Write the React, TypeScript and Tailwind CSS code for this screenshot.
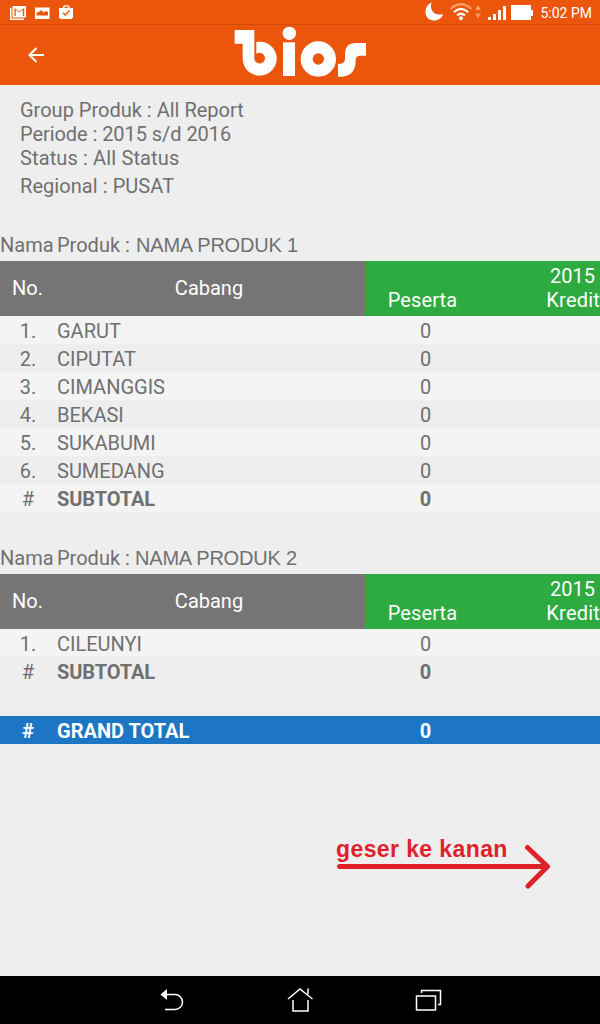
import React from 'react';

type RowData = { no: string; name: string; total?: boolean };

const groups: { title: string; rows: RowData[] }[] = [
  {
    title: 'NAMA PRODUK 1',
    rows: [
      { no: '1.', name: 'GARUT' },
      { no: '2.', name: 'CIPUTAT' },
      { no: '3.', name: 'CIMANGGIS' },
      { no: '4.', name: 'BEKASI' },
      { no: '5.', name: 'SUKABUMI' },
      { no: '6.', name: 'SUMEDANG' },
      { no: '#', name: 'SUBTOTAL', total: true },
    ],
  },
  {
    title: 'NAMA PRODUK 2',
    rows: [
      { no: '1.', name: 'CILEUNYI' },
      { no: '#', name: 'SUBTOTAL', total: true },
    ],
  },
];

function StatusBar() {
  return (
    <div className="flex h-[25px] items-center border-b border-[#d24a0b] text-white">
      <svg width="75" height="24" viewBox="0 0 75 24" fill="#fff">
        <path d="M10 8h1.500v10.500H24V20H10z" />
        <path fillRule="evenodd" d="M12.500 6H26v11.500H12.500zM14.500 8v8h1.300V9.800l3.500 2.700 3.500-2.700V16h1.400V8l-4.900 3.600z" />
        <path fillRule="evenodd" d="M35 7.500h14.500v11.500H35zM36.500 15.500H48V12l-2-1-2 1.500-3-2.500-2 2h-1l-1.500 1z" />
        <path fillRule="evenodd" d="M59 8h4V6.500l1.200-1.300h4L69.500 6.500V8H73v9.500L71.500 19h-11L59 17.500zM64.500 8h3.500V6.500h-3.500zM62.500 13.200l2.700 2.800 5-5-1-1-4 4-1.700-1.800z" />
      </svg>
      <svg className="ml-auto" width="114" height="24" viewBox="0 0 114 24" fill="#fff">
        <path d="M8.500 2.500C0 6 .5 20.500 11 20.500c4.500 0 8-2.500 9.200-6.500C12 16.500 6 10.500 8.500 2.500z" transform="translate(1 0)" />
        <g fill="none" strokeWidth="2.200" transform="translate(1 0)">
          <path stroke="#ff9b61" d="M27.500 9Q38 -.5 48.500 9" />
          <path stroke="#fff" d="M30.800 12.200Q38 5.500 45.200 12.200M34 15.500Q38 12 42 15.500" />
        </g>
        <circle cx="39" cy="18.200" r="2" />
        <path fill="#ff9b61" d="M53 10l3-5 3 5zM53 13.500h6l-3 5z" />
        <path d="M66 17h3v3h-3zM71 14h3v6h-3zM76 10h3v10h-3zM81 6h3v14h-3z" />
        <path d="M89 5h20v5h2v6h-2v4H89z" />
      </svg>
      <span className="mr-2 ml-1 pt-0.5 text-[14px] leading-[22px]">5:02 PM</span>
    </div>
  );
}

function Brand() {
  return (
    <svg width="160" height="60" viewBox="0 0 480 180" fill="#fff">
      <path d="M44 15H103V101A16 16 0 1 0 109 87V51A51 51 0 1 1 68 102V56H44z" />
      <circle cx="208" cy="25" r="20" />
      <rect x="189" y="52" width="36" height="101" />
      <circle cx="295" cy="102" r="35" fill="none" stroke="#fff" strokeWidth="36" />
      <path d="M438 54H408Q375 54 375 88V102Q375 117 354 117V155H365Q407 153 407 106Q407 92 420 92H438z" />
    </svg>
  );
}

function TableHead() {
  return (
    <div className="flex h-[55px] text-white">
      <div className="flex w-[365px] items-center bg-[#757575] pb-0.5">
        <span className="w-[55px] pl-3">No.</span>
        <span className="flex-1 pr-[2px] text-center">Cabang</span>
      </div>
      <div className="flex flex-1 items-end bg-[#2eab40] pb-1 leading-6">
        <span className="w-[115px] text-center tracking-[0.1px]">Peserta</span>
        <span className="flex-1 text-right whitespace-nowrap">
          <span className="block pr-[5px]">2015</span>
          <span className="block tracking-[0.2px]">Kredit</span>
        </span>
      </div>
    </div>
  );
}

function Row({ no, name, total }: RowData) {
  return (
    <div className="flex h-7 items-center pt-0.5 odd:bg-[#f4f4f4]">
      <span className="w-[57px] pr-px text-center">{no}</span>
      <span className={total ? 'w-[308px] font-bold tracking-[-0.1px]' : 'w-[308px]'}>{name}</span>
      <span className={total ? 'w-[121px] text-center font-bold' : 'w-[121px] text-center'}>0</span>
    </div>
  );
}

function BottomNav() {
  return (
    <div className="h-12 bg-black">
      <svg width="600" height="48" fill="none" stroke="#fff" strokeWidth="1.500">
        <path d="M166 18.500h9a7.500 7.500 0 0 1 0 15h-10" />
        <path d="M160.500 18.500l6.500-5.500v11z" fill="#fff" stroke="none" />
        <path d="M288 23l12-10 12.500 10M293 24v11h15V24M308 18v-5.500" />
        <path d="M416.500 20h19v14h-19zM421.500 17v-2.500h19v14H438" />
      </svg>
    </div>
  );
}

export default function App() {
  return (
    <div className="flex h-[1024px] w-[600px] flex-col overflow-hidden bg-[#eeeeee] font-['Roboto',sans-serif] text-[20px] text-[#707070]">
      <header className="h-[85px] bg-[#eb560c]">
        <StatusBar />
        <div className="flex h-[60px]">
          <div className="flex w-[220px] items-center pl-[28px]">
            <svg width="17" height="16" viewBox="0 0 17 16" fill="none" stroke="#fff" strokeWidth="2">
              <path d="M16 8H2M8.500 1L1.500 8l7 7" />
            </svg>
          </div>
          <Brand />
        </div>
      </header>
      <main className="flex-1">
        <div className="pt-[13px] pl-5 leading-6">
          <p>Group Produk : All Report</p>
          <p className="tracking-[-0.06px]">Periode : 2015 s/d 2016</p>
          <p className="tracking-[0.13px]">Status : All Status</p>
          <p className="leading-8 tracking-[0.06px]">Regional : PUSAT</p>
        </div>
        <div className="h-[29px]" />
        {groups.map((g) => (
          <section key={g.title} className="group mb-8">
            <h2 className="flex h-[30px] items-center pb-0.5 whitespace-nowrap">
              <span className="w-[57px]">Nama</span>
              <span className="w-[78px] group-first-of-type:w-[79px]">Produk :</span>
              <span className="font-['Liberation_Sans',sans-serif] text-[20px] tracking-[-0.2px]">{g.title}</span>
            </h2>
            <TableHead />
            <div>
              {g.rows.map((r) => (
                <Row key={r.name} {...r} />
              ))}
            </div>
          </section>
        ))}
        <div className="-mt-px flex h-7 items-center bg-[#1d76c4] pt-0.5 font-bold text-white">
          <span className="w-[57px] pr-px text-center">#</span>
          <span className="w-[308px]">GRAND TOTAL</span>
          <span className="w-[121px] text-center">0</span>
        </div>
        <div className="mt-[92px] ml-[336px] w-[220px] text-[#df2229]">
          <p className="font-['Liberation_Sans',sans-serif] text-[23px] leading-[26px] font-bold tracking-[0.4px] whitespace-nowrap">geser ke kanan</p>
          <svg className="-mt-5" width="218" height="48" fill="none" stroke="#df2229" strokeWidth="5" strokeLinecap="round" strokeLinejoin="round">
            <path d="M3.500 24.500H210M191.500 5.500l20 19L192 44" />
          </svg>
        </div>
      </main>
      <BottomNav />
    </div>
  );
}
